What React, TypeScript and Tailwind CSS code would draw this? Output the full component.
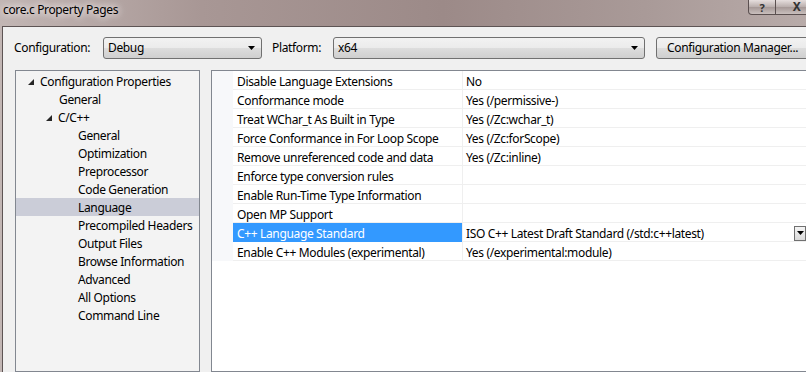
import React from "react";

const Arrow = () => (
  <svg width="7" height="4" viewBox="0 0 7 4" className="shrink-0">
    <polygon points="0,0 7,0 3.5,4" fill="#000" />
  </svg>
);

const Tri = () => (
  <svg width="6" height="6" viewBox="0 0 6 6" className="shrink-0">
    <polygon points="6,0 6,6 0,6" fill="#262626" />
  </svg>
);

const winBtn =
  "border border-[#5b5050] bg-[linear-gradient(#e6dedd,#b9aeac_50%,#a59896_51%,#c9bfbd)] text-[#333] font-bold flex items-center justify-center shrink-0";

const combo =
  "h-[22px] shrink-0 border border-[#707070] rounded-[3px] bg-[linear-gradient(#f2f2f2,#ebebeb_50%,#dddddd_50%,#cfcfcf)] flex items-center";

const tree: { label: string; level: number; expanded?: boolean; selected?: boolean }[] = [
  { label: "Configuration Properties", level: 0, expanded: true },
  { label: "General", level: 1 },
  { label: "C/C++", level: 1, expanded: true },
  { label: "General", level: 2 },
  { label: "Optimization", level: 2 },
  { label: "Preprocessor", level: 2 },
  { label: "Code Generation", level: 2 },
  { label: "Language", level: 2, selected: true },
  { label: "Precompiled Headers", level: 2 },
  { label: "Output Files", level: 2 },
  { label: "Browse Information", level: 2 },
  { label: "Advanced", level: 2 },
  { label: "All Options", level: 2 },
  { label: "Command Line", level: 2 },
];

const rows: { name: string; value: string; selected?: boolean }[] = [
  { name: "Disable Language Extensions", value: "No" },
  { name: "Conformance mode", value: "Yes (/permissive-)" },
  { name: "Treat WChar_t As Built in Type", value: "Yes (/Zc:wchar_t)" },
  { name: "Force Conformance in For Loop Scope", value: "Yes (/Zc:forScope)" },
  { name: "Remove unreferenced code and data", value: "Yes (/Zc:inline)" },
  { name: "Enforce type conversion rules", value: "" },
  { name: "Enable Run-Time Type Information", value: "" },
  { name: "Open MP Support", value: "" },
  { name: "C++ Language Standard", value: "ISO C++ Latest Draft Standard (/std:c++latest)", selected: true },
  { name: "Enable C++ Modules (experimental)", value: "Yes (/experimental:module)" },
];

export default function App() {
  return (
    <div className="w-[806px] h-[372px] overflow-hidden flex flex-col bg-[linear-gradient(90deg,#c2b6b4,#a89795_25%,#9c8a88_55%,#a99a98_80%,#b8aba9)] font-['Noto_Sans',sans-serif] text-[12px] text-black tracking-[-0.35px]">
      {/* title bar */}
      <div className="h-[26px] shrink-0 flex items-start">
        <div className="w-[748px] shrink-0 pl-[3px] pt-[2px] text-[12px] leading-[16px] [text-shadow:0_0_6px_#f4eeee,0_0_10px_#f4eeee]">
          core.c Property Pages
        </div>
        <div className={`${winBtn} w-[28px] h-[15px] border-t-0 rounded-bl-[4px] text-[11px] leading-none`}>?</div>
        <div className={`${winBtn} w-[42px] h-[15px] border-t-0 border-l-0 text-[12px] leading-none`}>X</div>
      </div>
      {/* client */}
      <div className="flex-1 ml-[2px] border-t border-l border-[#5d5454] bg-[#f0f0f0] flex flex-col min-h-0">
        <div className="h-[43px] shrink-0 flex items-start pt-[10px] pl-[11px] overflow-hidden">
          <div className="w-[89px] shrink-0 h-[22px] flex items-center whitespace-nowrap">Configuration:</div>
          <div className={`${combo} w-[159px] pl-[4px] pr-[6px] justify-between`}>
            <span>Debug</span>
            <Arrow />
          </div>
          <div className="w-[71px] shrink-0 h-[22px] flex items-center pl-[10px] whitespace-nowrap">Platform:</div>
          <div className={`${combo} w-[312px] pl-[4px] pr-[6px] justify-between`}>
            <span>x64</span>
            <Arrow />
          </div>
          <div className={`${combo} ml-[11px] w-[160px] pl-[10px] whitespace-nowrap`}>Configuration Manager...</div>
        </div>
        <div className="flex-1 flex min-h-0 pl-[12px]">
          {/* tree */}
          <div className="w-[185px] shrink-0 border border-[#828790] bg-[#f3f3f3] pt-[1px]">
            {tree.map((t, i) => (
              <div
                key={i}
                className={`h-[18px] flex items-center pt-[1px] ${t.selected ? "bg-[#cbcdd8]" : ""}`}
              >
                <div
                  className={`flex items-center ${
                    t.level === 0 ? "pl-[12px]" : t.level === 1 ? (t.expanded ? "pl-[30px]" : "pl-[43px]") : "pl-[62px]"
                  }`}
                >
                  {t.expanded && (
                    <span className="w-[12px] flex items-center">
                      <Tri />
                    </span>
                  )}
                  <span>{t.label}</span>
                </div>
              </div>
            ))}
          </div>
          {/* grid */}
          <div className="ml-[11px] w-[700px] shrink-0 border border-[#828790] bg-white">
            {rows.map((r, i) => (
              <div key={i} className="h-[19px] flex">
                <div className="w-[21px] shrink-0 bg-[#f7f8fa] border-b border-[#f7f8fa]" />
                <div
                  className={`w-[229px] shrink-0 pl-[4px] pt-[4px] flex items-center border-b ${
                    r.selected ? "bg-[#3399ff] text-white border-[#3399ff]" : "border-[#efefef]"
                  }`}
                >
                  {r.name}
                </div>
                <div className="w-[1px] shrink-0 bg-[#efefef]" />
                <div className="flex-1 flex items-center border-b border-[#efefef]">
                  <div className="w-[331px] shrink-0 pl-[3px] pt-[4px] whitespace-nowrap">{r.value}</div>
                  {r.selected && (
                    <div className="w-[12px] h-[15px] mt-[2px] shrink-0 border border-[#707070] bg-[linear-gradient(#f4f4f4,#dadada)] flex items-center justify-center">
                      <Arrow />
                    </div>
                  )}
                </div>
              </div>
            ))}
          </div>
        </div>
      </div>
    </div>
  );
}
